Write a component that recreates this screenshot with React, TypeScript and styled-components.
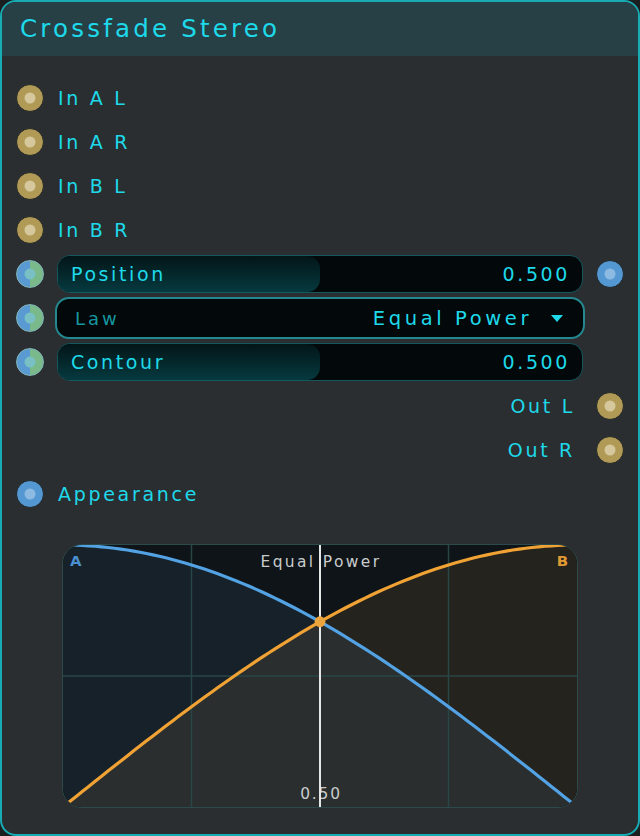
import React from "react";
import styled, { createGlobalStyle } from "styled-components";

const GlobalStyle = createGlobalStyle`
  html, body {
    margin: 0;
    padding: 0;
    background: #1c1f20;
  }
  * {
    box-sizing: border-box;
  }
`;

const FONT = `"DejaVu Sans", "Noto Sans", sans-serif`;
const CYAN = "#1ed9ea";

const NodeSc = styled.div`
  width: 640px;
  height: 836px;
  border: 2px solid #17abb4;
  border-radius: 16px;
  background: #2a2e30;
  overflow: hidden;
  display: flex;
  flex-direction: column;
  font-family: ${FONT};
`;

const HeaderSc = styled.div`
  height: 54px;
  flex-shrink: 0;
  background: #264045;
  display: flex;
  align-items: center;
  padding-left: 18px;
  padding-bottom: 1px;
  color: ${CYAN};
  font-size: 24.5px;
  letter-spacing: 3.2px;
`;

const BodySc = styled.div`
  display: flex;
  flex-direction: column;
  padding: 20px 14px 0 14px;
`;

const RowSc = styled.div`
  height: 44px;
  display: flex;
  align-items: center;
  gap: 14px;
`;

const OutRowSc = styled(RowSc)`
  justify-content: flex-end;
  gap: 21px;
`;

const ControlRowSc = styled.div`
  height: 44px;
  display: grid;
  grid-template-columns: 28px 1fr 28px;
  column-gap: 13px;
  align-items: center;
`;

const LabelSc = styled.span`
  color: ${CYAN};
  font-size: 19px;
  letter-spacing: 2.7px;
`;

type PortKind = "gold" | "blue" | "split";

const PortSc = styled.div<{ $kind: PortKind }>`
  width: 28px;
  height: 28px;
  border-radius: 50%;
  flex-shrink: 0;
  position: relative;
  border: 1.5px solid
    ${(p) => (p.$kind === "split" ? "#7fb4b8" : "#222628")};
  background: ${(p) =>
    p.$kind === "gold"
      ? "#b09a56"
      : p.$kind === "blue"
      ? "#5398d2"
      : "linear-gradient(90deg, #5a9ad2 50%, #79b98a 50%)"};

  &::after {
    content: "";
    position: absolute;
    left: 50%;
    top: 50%;
    width: 11px;
    height: 11px;
    border-radius: 50%;
    transform: translate(-50%, -50%);
    background: ${(p) =>
      p.$kind === "gold"
        ? "#d6c89c"
        : p.$kind === "blue"
        ? "#8cbae2"
        : "#78c0c4"};
  }
`;

const SliderSc = styled.div`
  height: 38px;
  position: relative;
  border: 1px solid #13585c;
  border-radius: 13px;
  background: #03090b;
  overflow: hidden;
  display: flex;
  align-items: center;
  justify-content: space-between;
  padding: 0 12px 0 13px;
`;

const SliderFillSc = styled.div`
  position: absolute;
  left: 0;
  top: 0;
  bottom: 0;
  border-radius: 0 13px 13px 0;
  background: linear-gradient(180deg, #031518 0%, #053a3f 100%);
`;

const SliderTextSc = styled.span`
  position: relative;
  color: ${CYAN};
  font-size: 19px;
  letter-spacing: 2.6px;
`;

const DropdownSc = styled.div`
  height: 42px;
  margin: 0 -2px;
  border: 2px solid #23888f;
  border-radius: 14px;
  background: #03080a;
  display: flex;
  align-items: center;
  padding: 0 20px 0 18px;
`;

const DropLabelSc = styled.span`
  color: #16969f;
  font-size: 18px;
  letter-spacing: 3px;
  flex: 1;
`;

const DropValueSc = styled.span`
  color: ${CYAN};
  font-size: 19.5px;
  letter-spacing: 3.6px;
  margin-right: 19px;
`;

const CaretSc = styled.span`
  width: 0;
  height: 0;
  border-left: 6.5px solid transparent;
  border-right: 6.5px solid transparent;
  border-top: 7px solid ${CYAN};
`;

const ChartWrapSc = styled.div`
  margin: 28px 0 0 46px;
  width: 516px;
  height: 264px;
  border: 1.5px solid #2d4a4a;
  border-radius: 20px;
  overflow: hidden;
  background: #0f1418;
`;

type SliderProps = { label: string; value: number };

const Slider = ({ label, value }: SliderProps) => (
  <SliderSc>
    <SliderFillSc style={{ width: `${value * 100}%` }} />
    <SliderTextSc>{label}</SliderTextSc>
    <SliderTextSc>{value.toFixed(3)}</SliderTextSc>
  </SliderSc>
);

const W = 516;
const H = 264;

const curve = (fn: (t: number) => number, from = 0, to = 1) => {
  const pts: string[] = [];
  const n = 80;
  for (let i = 0; i <= n; i++) {
    const t = from + ((to - from) * i) / n;
    pts.push(`${(t * W).toFixed(2)},${((1 - fn(t)) * H).toFixed(2)}`);
  }
  return pts;
};

const gainA = (t: number) => Math.cos((t * Math.PI) / 2);
const gainB = (t: number) => Math.sin((t * Math.PI) / 2);

const CrossfadeChart = ({ position }: { position: number }) => {
  const a = curve(gainA);
  const b = curve(gainB);
  const lineA = "M" + a.join(" L");
  const lineB = "M" + b.join(" L");
  const areaA = `${lineA} L${W},${H} L0,${H} Z`;
  const areaB = `${lineB} L${W},${H} L0,${H} Z`;
  const low = [
    ...curve(gainB, 0, position),
    ...curve(gainA, position, 1),
  ];
  const areaLow = `M${low.join(" L")} L${W},${H} L0,${H} Z`;
  const px = position * W;
  const py = (1 - gainA(position)) * H;
  const grid = "#284646";

  return (
    <svg width="100%" height="100%" viewBox={`0 0 ${W} ${H}`} preserveAspectRatio="none">
      <path d={areaA} fill="#16212a" />
      <path d={areaB} fill="#25231e" />
      <path d={areaLow} fill="#2a2e2f" />
      <line x1={W / 4} y1={0} x2={W / 4} y2={H} stroke={grid} strokeWidth={1.5} />
      <line x1={(W * 3) / 4} y1={0} x2={(W * 3) / 4} y2={H} stroke={grid} strokeWidth={1.5} />
      <line x1={0} y1={H / 2} x2={W} y2={H / 2} stroke={grid} strokeWidth={1.5} />
      <text
        x={W / 2 + 1}
        y={22}
        textAnchor="middle"
        fill="#c9cccc"
        fontSize={15.5}
        letterSpacing={2.4}
        fontFamily={FONT}
      >
        Equal Power
      </text>
      <text
        x={W / 2 + 1}
        y={256}
        textAnchor="middle"
        fill="#c9cccc"
        fontSize={15.5}
        letterSpacing={1.8}
        fontFamily={FONT}
      >
        0.50
      </text>
      <text x={7} y={21} fill="#4a8fcf" fontSize={15} fontWeight={700} fontFamily={FONT}>
        A
      </text>
      <text
        x={W - 9}
        y={21}
        textAnchor="end"
        fill="#e09a32"
        fontSize={15}
        fontWeight={700}
        fontFamily={FONT}
      >
        B
      </text>
      <path d={lineA} fill="none" stroke="#52a2e4" strokeWidth={3.2} />
      <path d={lineB} fill="none" stroke="#f0a334" strokeWidth={3.2} />
      <line x1={px} y1={0} x2={px} y2={H} stroke="#e6e8e8" strokeWidth={2} />
      <circle cx={px} cy={py} r={5.5} fill="#eca43c" />
    </svg>
  );
};

const inputs = ["In A L", "In A R", "In B L", "In B R"];

export default function App() {
  return (
    <>
      <GlobalStyle />
      <NodeSc>
        <HeaderSc>Crossfade Stereo</HeaderSc>
        <BodySc>
          {inputs.map((name) => (
            <RowSc key={name}>
              <PortSc $kind="gold" />
              <LabelSc>{name}</LabelSc>
            </RowSc>
          ))}
          <ControlRowSc>
            <PortSc $kind="split" />
            <Slider label="Position" value={0.5} />
            <PortSc $kind="blue" />
          </ControlRowSc>
          <ControlRowSc>
            <PortSc $kind="split" />
            <DropdownSc>
              <DropLabelSc>Law</DropLabelSc>
              <DropValueSc>Equal Power</DropValueSc>
              <CaretSc />
            </DropdownSc>
          </ControlRowSc>
          <ControlRowSc>
            <PortSc $kind="split" />
            <Slider label="Contour" value={0.5} />
          </ControlRowSc>
          <OutRowSc>
            <LabelSc>Out L</LabelSc>
            <PortSc $kind="gold" />
          </OutRowSc>
          <OutRowSc>
            <LabelSc>Out R</LabelSc>
            <PortSc $kind="gold" />
          </OutRowSc>
          <RowSc>
            <PortSc $kind="blue" />
            <LabelSc>Appearance</LabelSc>
          </RowSc>
          <ChartWrapSc>
            <CrossfadeChart position={0.5} />
          </ChartWrapSc>
        </BodySc>
      </NodeSc>
    </>
  );
}
